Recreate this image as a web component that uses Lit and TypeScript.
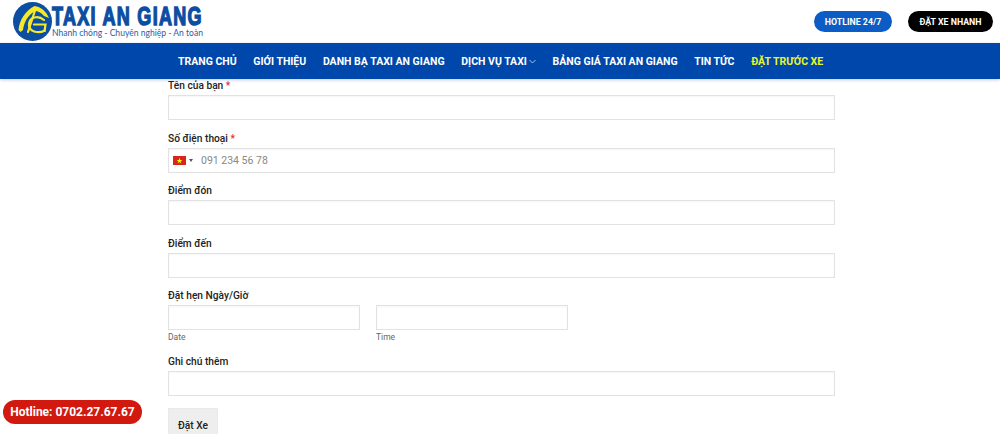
import { LitElement, html, css } from "lit";
import { customElement } from "lit/decorators.js";

const navItems = [
  { t: "TRANG CHỦ" },
  { t: "GIỚI THIỆU" },
  { t: "DANH BẠ TAXI AN GIANG" },
  { t: "DỊCH VỤ TAXI", caret: true },
  { t: "BẢNG GIÁ TAXI AN GIANG" },
  { t: "TIN TỨC" },
  { t: "ĐẶT TRƯỚC XE", hi: true },
];

@customElement("app-root")
export class AppRoot extends LitElement {
  static styles = css`
    :host { display: block; position: relative; width: 1000px; height: 434px; overflow: hidden; background: #fff; font-family: Roboto, sans-serif; color: #222; }
    .top { height: 43px; display: flex; align-items: center; padding-left: 13px; padding-right: 7px; box-sizing: border-box; }
    .logo { display: flex; align-items: center; flex: 1; }
    .logo svg { width: 39px; height: 39px; flex: none; }
    .brand { display: flex; flex-direction: column; width: 150px; }
    .brand-name { font-family: "Liberation Sans", sans-serif; font-weight: 700; font-size: 25px; line-height: 20px; height: 20px; color: #0b4ea2; -webkit-text-stroke: 1.4px #0b4ea2; letter-spacing: 1.8px; white-space: nowrap; transform: translateY(1px) scale(.72, 1.05); transform-origin: left center; }
    .brand-sub { font-family: Lato, sans-serif; font-size: 8.55px; line-height: 9px; margin-top: 4px; color: #2b5ca6; white-space: nowrap; position: relative; }
    .pill { height: 21px; border-radius: 11px; display: flex; align-items: center; justify-content: center; color: #fff; font-size: 8.8px; font-weight: 700; box-sizing: border-box; }
    .blue { width: 78px; background: #0b5cc4; margin-right: 16px; }
    .black { width: 85px; background: #000; }
    nav { height: 36px; background: #0047ab; display: flex; align-items: center; padding-left: 178px; gap: 16.7px; box-shadow: 0 1px 3px rgba(0, 60, 170, .25); position: relative; }
    nav a { color: #fff; font-size: 10.5px; font-weight: 700; white-space: nowrap; display: flex; align-items: center; }
    nav a.hi { color: #e9f52a; }
    nav svg { width: 7px; height: 5px; margin-left: 2px; }
    main { padding-left: 168px; width: 667px; }
    .field { height: 52.6px; }
    .field.first { height: 41px; margin-bottom: 11.7px; display: flex; flex-direction: column; justify-content: flex-end; }
    .field.last { height: auto; }
    label { display: block; font-size: 10.2px; font-weight: 500; line-height: 14px; height: 16px; color: #222; }
    .req { color: #d33; }
    .box { height: 25px; box-sizing: border-box; border: 1px solid #e2e2e2; background: #fff; box-shadow: inset 0 1px 2px rgba(0,0,0,.04); display: flex; align-items: center; }
    .flag { margin-left: 4px; width: 13px; height: 9px; flex: none; }
    .arrow { width: 0; height: 0; border-left: 2px solid transparent; border-right: 2px solid transparent; border-top: 3px solid #555; margin-left: 3px; }
    .ph { margin-left: 8px; color: #888; font-size: 10.5px; }
    .dt { display: flex; gap: 16px; }
    .dt > div { width: 192px; }
    .sub { font-size: 8.5px; color: #666; line-height: 13px; margin-top: 1px; }
    .dt-field { height: 65.5px; }
    .btn { width: 50px; height: 36px; background: #eee; display: flex; align-items: center; justify-content: center; font-size: 10.2px; font-weight: 500; margin-top: 12px; border: 1px solid #e9e9e9; box-sizing: border-box; }
    .hotline { position: absolute; left: 3px; top: 400px; width: 139px; height: 24px; border-radius: 12px; background: #d2190f; color: #fff; font-size: 12px; font-weight: 700; display: flex; align-items: center; justify-content: center; white-space: nowrap; }
  `;

  render() {
    const field = (l: string) => html`<div class="field"><label>${l}</label><div class="box"></div></div>`;
    return html`
      <div class="top">
        <div class="logo">
          <svg viewBox="0 0 39 39">
            <circle cx="19.5" cy="19.5" r="19.5" fill="#0b4ea2"/>
            <path d="M5.500 28 C6.500 18 12 9 21.500 4 C28 5 33 9 36 16 L31 14 C28 10.500 25 9 22 9 C15 13 11 20 10 28 L7.500 30Z" fill="#f5e92a"/>
            <g fill="none" stroke="#f5e92a" stroke-width="2.2" stroke-linecap="round">
              <path d="M22.500 7 L15 30"/>
              <path d="M31 18 C25 13 16.500 15 16 22 C15.500 30 25 32 32 28.500"/>
              <path d="M21 22.500 L32.500 22.500 L31.500 29"/>
            </g>
          </svg>
          <div class="brand">
            <div class="brand-name">TAXI AN GIANG</div>
            <div class="brand-sub">Nhanh chóng - Chuyên nghiệp - An toàn</div>
          </div>
        </div>
        <div class="pill blue">HOTLINE 24/7</div>
        <div class="pill black">ĐẶT XE NHANH</div>
      </div>
      <nav>
        ${navItems.map((n) => html`<a class=${n.hi ? "hi" : ""}>${n.t}${n.caret ? html`<svg viewBox="0 0 7 5"><path d="M.5 1 L3.500 4 L6.500 1" fill="none" stroke="#cfe0f5" stroke-width=".8"/></svg>` : ""}</a>`)}
      </nav>
      <main>
        <div class="field first"><label>Tên của bạn <span class="req">*</span></label><div class="box"></div></div>
        <div class="field"><label>Số điện thoại <span class="req">*</span></label>
          <div class="box">
            <svg class="flag" viewBox="0 0 13 9"><rect width="13" height="9" fill="#da251d"/><path d="M6.500 1.800l.7 2.100h2.200l-1.800 1.300.7 2.100-1.800-1.300-1.800 1.300.7-2.100-1.800-1.300h2.200z" fill="#ff0"/></svg>
            <span class="arrow"></span><span class="ph">091 234 56 78</span>
          </div>
        </div>
        ${field("Điểm đón")}
        ${field("Điểm đến")}
        <div class="field dt-field"><label>Đặt hẹn Ngày/Giờ</label>
          <div class="dt">
            <div><div class="box"></div><div class="sub">Date</div></div>
            <div><div class="box"></div><div class="sub">Time</div></div>
          </div>
        </div>
        <div class="field last"><label>Ghi chú thêm</label><div class="box"></div></div>
        <div class="btn">Đặt Xe</div>
      </main>
      <div class="hotline">Hotline: 0702.27.67.67</div>
    `;
  }
}
